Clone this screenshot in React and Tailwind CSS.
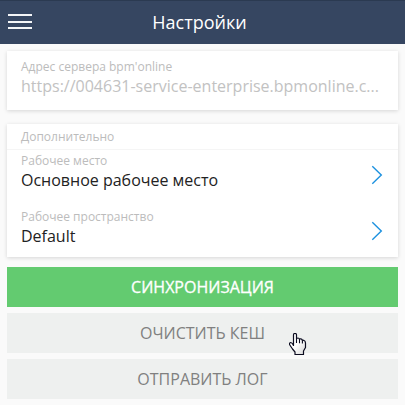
function Field({ label, value }) {
  return (
    <div className="flex h-14 items-center justify-between pr-[15px]">
      <div className="pb-2">
        <div className="h-5 text-[12px] leading-5 text-[#bcbcbc]">{label}</div>
        <div className="h-5 text-[16px] leading-[19px] text-[#222]">{value}</div>
      </div>
      <svg width="12" height="20" viewBox="0 0 12 20" fill="none" stroke="#1c91df" strokeWidth="1.4">
        <path d="M1.3 1.3 10.3 10 1.3 18.7" />
      </svg>
    </div>
  );
}

function Pointer() {
  return (
    <svg className="absolute left-[289px] top-[333px]" width="18" height="23" viewBox="0 0 18 23">
      <defs>
        <linearGradient id="hand" x1="0" y1="0" x2="1" y2="1">
          <stop offset="0.5" stopColor="#fff" />
          <stop offset="1" stopColor="#d4d4d4" />
        </linearGradient>
      </defs>
      <path
        d="M4.5 12.5V1.8Q4.5.5 6 .5T7.5 1.8V6Q7.5 5 8.9 5T10.5 6.3Q10.7 5.8 11.8 5.9T13.3 7.3Q13.6 7 14.7 7.3 16.5 8 16.5 10V14.5L14.5 18V21.5H6V19L3.5 16 .5 11.5Q.3 9.5 1.8 9.5 3.3 9.7 4.5 12.5Z"
        fill="url(#hand)"
        stroke="#0c0c20"
        strokeWidth="1.2"
        strokeLinejoin="round"
      />
      <path d="M7.5 6v4M10.5 6.3v4M13.4 7.3v3.3" stroke="#0c0c20" strokeWidth="1.1" />
    </svg>
  );
}

export default function App() {
  return (
    <div className="relative h-[405px] w-[405px] overflow-hidden bg-[#fafafa] font-['Open_Sans','Noto_Sans',sans-serif] font-normal">
      <header className="relative flex h-11 items-center justify-center border-t border-[#2b3a51] bg-[#364661]">
        <div className="absolute left-2 top-[13px] flex flex-col gap-[4.5px]">
          <div className="h-0.5 w-6 bg-[#f4f5f7]" />
          <div className="h-0.5 w-6 bg-[#f4f5f7]" />
          <div className="h-0.5 w-6 bg-[#f4f5f7]" />
        </div>
        <h1 className="pb-[2px] pr-[6px] text-[18px] leading-6 text-white">Настройки</h1>
      </header>
      <main className="pl-[7px] pr-[7px] pt-[7px]">
        <section className="h-[59px] w-[391px] bg-white pl-[14px] pt-[6px] shadow-[0_1px_4px_rgba(0,0,0,0.15)]">
          <div className="h-5 text-[12px] leading-5 text-[#bcbcbc]">Адрес сервера bpm'online</div>
          <div className="h-5 whitespace-nowrap text-[16px] leading-[19px] text-[#c2c2c2]">
            https://004631-service-enterprise.bpmonline.c...
          </div>
        </section>
        <section className="mt-[14px] h-[133px] w-[391px] bg-white shadow-[0_1px_4px_rgba(0,0,0,0.15)]">
          <div className="h-[26px] border-b border-[#f5f5f5] pl-[14px] text-[12px] leading-[26px] text-[#bcbcbc]">
            Дополнительно
          </div>
          <div className="-mt-[3px] pl-[14px]">
            <Field label="Рабочее место" value="Основное рабочее место" />
            <Field label="Рабочее пространство" value="Default" />
          </div>
        </section>
        <div className="mt-[10px] flex w-[391px] flex-col gap-[6px] text-[16px]">
          <button className="h-10 bg-[#63cb70] text-white [-webkit-text-stroke:0.3px_white]">СИНХРОНИЗАЦИЯ</button>
          <button className="h-10 bg-[#eef0ef] text-[#808080]">ОЧИСТИТЬ КЕШ</button>
          <button className="h-10 bg-[#eef0ef] text-[#808080]">ОТПРАВИТЬ ЛОГ</button>
        </div>
      </main>
      <Pointer />
    </div>
  );
}
